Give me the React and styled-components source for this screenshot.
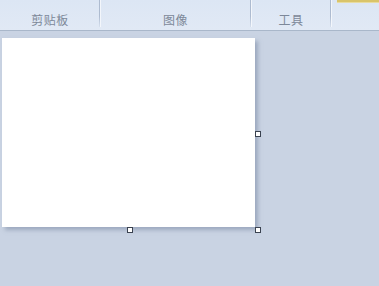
import React from "react";
import styled, { createGlobalStyle } from "styled-components";

const Global = createGlobalStyle`
  html, body { margin: 0; padding: 0; }
  body {
    width: 379px; height: 286px; overflow: hidden;
    background: #c9d3e3;
    font-family: "Noto Sans CJK SC", "Noto Sans", sans-serif;
  }
`;

const Page = styled.div`
  display: flex;
  flex-direction: column;
  width: 379px;
  height: 286px;
`;

const Ribbon = styled.div`
  display: flex;
  height: 30px;
  background: linear-gradient(#dce6f4, #e1e9f5);
  border-bottom: 1px solid #a9b7ca;
  box-shadow: 0 1px 0 #d5deea;
`;

const Group = styled.div`
  position: relative;
  width: ${(p) => p.$w}px;
  display: flex;
  align-items: flex-end;
  justify-content: center;
  padding-bottom: 3px;
  box-sizing: border-box;
  flex: ${(p) => (p.$grow ? 1 : "none")};
  &::after {
    content: "";
    display: ${(p) => (p.$sep ? "block" : "none")};
    position: absolute;
    top: 0;
    right: 0;
    bottom: 3px;
    width: 1px;
    background: linear-gradient(#adbbd0 60%, rgba(173, 187, 208, 0.2));
    box-shadow: 1px 0 0 #f3f6fb;
  }
`;

const Label = styled.span`
  font-size: 12px;
  line-height: 14px;
  color: #7d8899;
  letter-spacing: 0.5px;
`;

const Highlight = styled.div`
  position: absolute;
  top: 0;
  left: 6px;
  right: 0;
  height: 2px;
  background: #d9c46a;
  border-bottom: 1px solid #e8dca0;
`;

const Workspace = styled.div`
  flex: 1;
  padding: 7px 0 0 2px;
  background: #c9d3e3;
`;

const Canvas = styled.div`
  position: relative;
  width: 253px;
  height: 189px;
  background: #ffffff;
  box-shadow: 3px 3px 4px rgba(120, 135, 160, 0.55);
`;

const Handle = styled.div`
  position: absolute;
  width: 4px;
  height: 4px;
  background: #ffffff;
  border: 1px solid #3a4250;
  left: ${(p) => p.$x}px;
  top: ${(p) => p.$y}px;
`;

export default function App() {
  return (
    <>
      <Global />
      <Page>
        <Ribbon>
          <Group $w={100} $sep>
            <Label>剪贴板</Label>
          </Group>
          <Group $w={151} $sep>
            <Label>图像</Label>
          </Group>
          <Group $w={80} $sep>
            <Label>工具</Label>
          </Group>
          <Group $grow>
            <Highlight />
          </Group>
        </Ribbon>
        <Workspace>
          <Canvas>
            <Handle $x={253} $y={93} />
            <Handle $x={125} $y={189} />
            <Handle $x={253} $y={189} />
          </Canvas>
        </Workspace>
      </Page>
    </>
  );
}
